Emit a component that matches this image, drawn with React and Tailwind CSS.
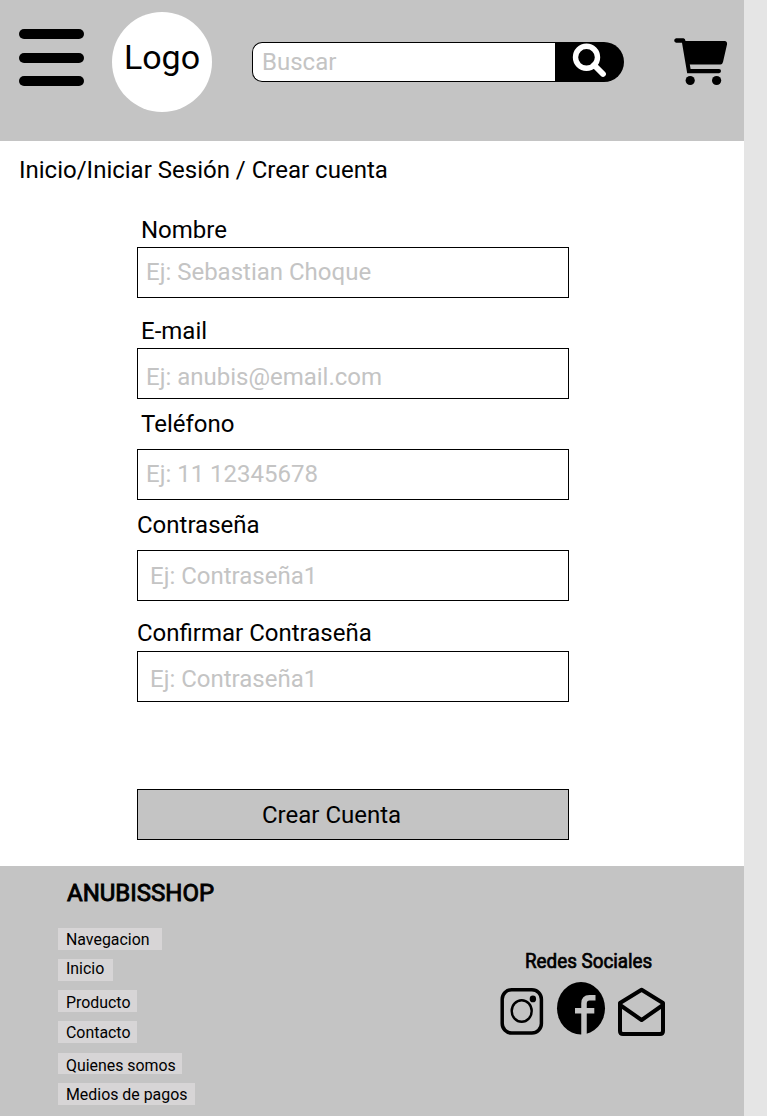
const fields = [
  { label: "Nombre", placeholder: "Ej: Sebastian Choque", type: "text", box: "h-[51px] pt-[10px] pb-[11px] pl-2", labelBox: "h-[31px] pl-1" },
  { label: "E-mail", placeholder: "Ej: anubis@email.com", type: "email", box: "h-[51px] pt-[14px] pb-[7px] pl-2", labelBox: "mt-[19px] h-[31px] pl-1" },
  { label: "Teléfono", placeholder: "Ej: 11 12345678", type: "tel", box: "h-[51px] pt-[10px] pb-[11px] pl-2", labelBox: "mt-[11px] h-[39px] pl-1" },
  { label: "Contraseña", placeholder: "Ej: Contraseña1", type: "password", box: "h-[51px] pt-[11px] pb-[10px] pl-3", labelBox: "mt-[11px] h-[39px]" },
  { label: "Confirmar Contraseña", placeholder: "Ej: Contraseña1", type: "password", box: "h-[51px] pt-[13px] pb-[8px] pl-3", labelBox: "mt-[18px] h-[32px]" },
];

const links = [
  { text: "Navegacion", cls: "h-[22px] w-[104px] pt-[2px]" },
  { text: "Inicio", cls: "mt-[9px] h-[22px] w-[55px] pt-0" },
  { text: "Producto", cls: "mt-[9px] h-[22px] w-[79px] pt-[3px]" },
  { text: "Contacto", cls: "mt-[9px] h-[22px] w-[79px] pt-[2px]" },
  { text: "Quienes somos", cls: "mt-[10px] h-[21px] w-[124px] pt-[3px]" },
  { text: "Medios de pagos", cls: "mt-[9px] h-[22px] w-[137px] pt-[2px]" },
];

function CartIcon() {
  return (
    <svg width="54" height="48" viewBox="0 0 54 48" className="mt-[38px] ml-[50px] shrink-0">
      <path d="M2.200 0.300H9.500Q11.200 0.500 11.500 3H50.500Q53.500 3.300 53 6.500L49 24Q48.300 26.500 46.500 26.500H15.800L16.600 31H45Q47 31.200 47 33Q47 35 45 35.200H13.200L8 4.800H2.200Q0.200 4.500 0.200 2.500Q0.200 0.500 2.200 0.300Z" />
      <circle cx="16.200" cy="42.500" r="4.600" />
      <circle cx="42.600" cy="42.500" r="4.600" />
    </svg>
  );
}

function Header() {
  return (
    <header className="flex h-[141px] items-start bg-[#c4c4c4]">
      <button aria-label="Menú" className="mt-[29px] ml-[19px] flex w-[65px] shrink-0 flex-col gap-[13.500px]">
        <span className="h-[10px] rounded-full bg-black" />
        <span className="h-[10px] rounded-full bg-black" />
        <span className="h-[10px] rounded-full bg-black" />
      </button>
      <div className="mt-3 ml-7 flex h-[100px] w-[100px] shrink-0 justify-center rounded-full bg-white pt-[24px] text-[34px] leading-[42px]">
        Logo
      </div>
      <div className="mt-[42px] ml-10 flex h-10 w-[372px] shrink-0">
        <input
          placeholder="Buscar"
          className="h-10 w-[303px] rounded-l-[10px] border border-r-0 border-black bg-white pl-[9px] text-2xl leading-7 placeholder:text-[#c4c4c4]"
        />
        <button aria-label="Buscar" className="h-10 w-[69px] rounded-r-[20px] bg-black">
          <svg width="69" height="40" viewBox="0 0 69 40">
            <circle cx="31.500" cy="15.300" r="11" fill="none" stroke="#fff" strokeWidth="5.400" />
            <path d="M39 23L48 32" fill="none" stroke="#fff" strokeWidth="5.800" strokeLinecap="round" />
          </svg>
        </button>
      </div>
      <CartIcon />
    </header>
  );
}

function Footer() {
  return (
    <footer className="flex h-[250px] items-start bg-[#c4c4c4]">
      <div className="ml-[58px] w-[442px] shrink-0">
        <h2 className="mt-[13px] ml-[9px] h-[49px] text-2xl leading-7 [-webkit-text-stroke:0.9px_#000]">ANUBISSHOP</h2>
        <ul>
          {links.map((l) => (
            <li key={l.text} className={`bg-[#d7d5d6] pl-2 text-[15.900px] leading-[19px] whitespace-nowrap ${l.cls}`}>
              {l.text}
            </li>
          ))}
        </ul>
      </div>
      <div className="shrink-0">
        <h3 className="mt-[82px] ml-[24.500px] h-[34px] origin-left scale-x-[0.94] pt-px text-xl leading-6 [-webkit-text-stroke:0.7px_#000]">Redes Sociales</h3>
        <div className="flex">
          <svg width="44" height="56" viewBox="500 982 44 56" fill="none" stroke="#000">
            <rect x="502.200" y="989.700" width="39.200" height="43.300" rx="9.500" strokeWidth="3.500" />
            <ellipse cx="521.700" cy="1011" rx="10" ry="10.800" strokeWidth="2.400" />
            <ellipse cx="532.900" cy="998.900" rx="3.200" ry="3.400" fill="#000" stroke="none" />
          </svg>
          <svg width="50" height="56" viewBox="556 982 50 56" className="ml-3">
            <ellipse cx="581" cy="1008.300" rx="24" ry="26.200" />
            <path d="M584 1036V1003.500q0-5.800 5.500-5.800h6M575 1010.800h19.300" fill="none" stroke="#c4c4c4" strokeWidth="5.500" />
          </svg>
          <svg width="50" height="56" viewBox="616 982 50 56" fill="none" stroke="#000" strokeWidth="4" strokeLinejoin="round" className="ml-[10px]">
            <path d="M620 1003L641.600 989.800L663 1003V1031q0 3-3 3H623q-3 0-3-3Z" />
            <path d="M620 1005L641.600 1020L663 1005" />
          </svg>
        </div>
      </div>
    </footer>
  );
}

export default function App() {
  return (
    <div className="h-[1116px] w-[767px] overflow-hidden bg-[#e5e5e5] font-['Roboto',sans-serif] text-black">
      <div className="w-[744px] bg-white">
        <Header />
        <main className="h-[725px] pt-[15px]">
          <nav className="pl-[19px] text-2xl leading-7">Inicio/Iniciar Sesión / Crear cuenta</nav>
          <form className="mt-8 ml-[137px] flex w-[432px] flex-col text-2xl leading-7">
            {fields.map((f) => (
              <label key={f.label} className="flex flex-col">
                <span className={f.labelBox}>{f.label}</span>
                <input
                  type={f.type}
                  placeholder={f.placeholder}
                  className={`w-full border border-black bg-white placeholder:text-[#c4c4c4] ${f.box}`}
                />
              </label>
            ))}
            <button type="button" className="mt-[87px] h-[51px] border border-black bg-[#c4c4c4] pl-[124px] text-left">
              Crear Cuenta
            </button>
          </form>
        </main>
        <Footer />
      </div>
    </div>
  );
}
